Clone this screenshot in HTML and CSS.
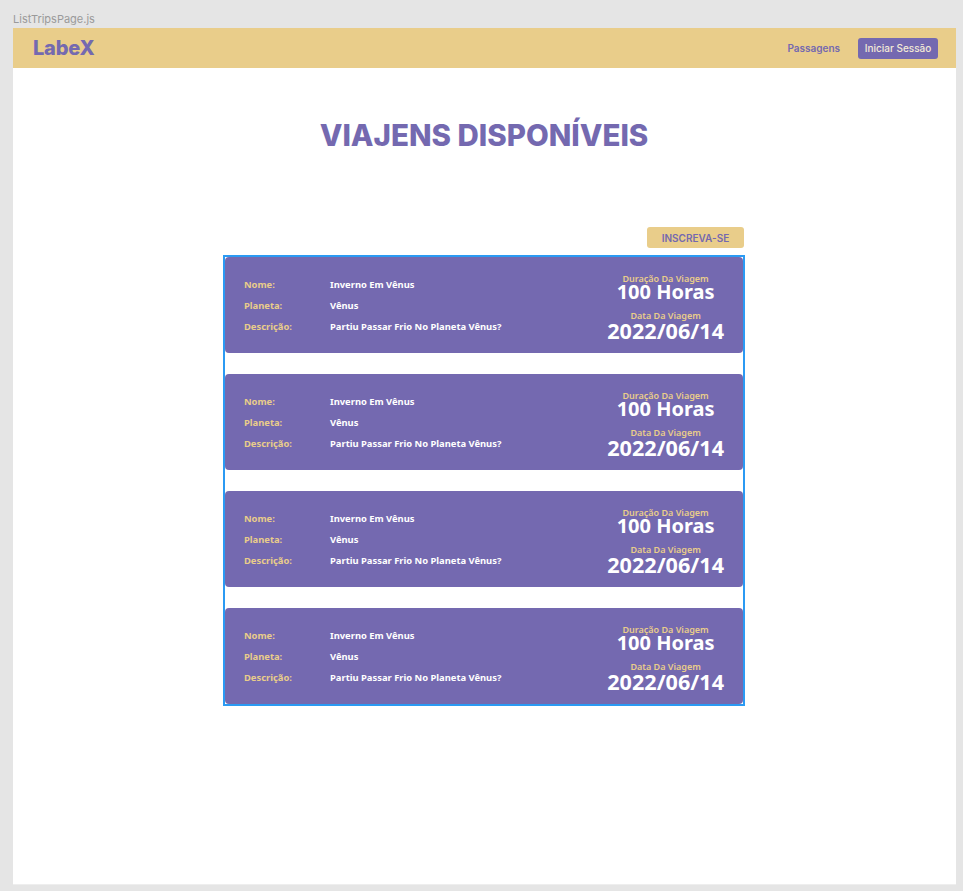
FILE: index.html
```html
<!DOCTYPE html>
<html lang="pt">
<head>
<meta charset="utf-8">
<title>ListTripsPage.js</title>
<link rel="stylesheet" href="styles.css">
</head>
<body>
<div class="frame-label">ListTripsPage.js</div>
<div class="frame">
  <header class="topbar">
    <div class="logo">LabeX</div>
    <nav class="nav">
      <a class="nav-link">Passagens</a>
      <button class="btn-login">Iniciar Sessão</button>
    </nav>
  </header>
  <main class="main">
    <h1 class="title">VIAJENS DISPONÍVEIS</h1>
    <section class="trips">
      <div class="actions">
        <button class="btn-sub">INSCREVA-SE</button>
      </div>
      <div class="list">
        <article class="card">
          <div class="info">
            <div class="row"><span class="lbl">Nome:</span><span class="val">Inverno Em Vênus</span></div>
            <div class="row"><span class="lbl">Planeta:</span><span class="val">Vênus</span></div>
            <div class="row"><span class="lbl">Descrição:</span><span class="val">Partiu Passar Frio No Planeta Vênus?</span></div>
          </div>
          <div class="meta">
            <div class="m-lbl">Duração Da Viagem</div>
            <div class="m-hours">100 Horas</div>
            <div class="m-lbl m-lbl2">Data Da Viagem</div>
            <div class="m-date">2022/06/14</div>
          </div>
        </article>
        <article class="card">
          <div class="info">
            <div class="row"><span class="lbl">Nome:</span><span class="val">Inverno Em Vênus</span></div>
            <div class="row"><span class="lbl">Planeta:</span><span class="val">Vênus</span></div>
            <div class="row"><span class="lbl">Descrição:</span><span class="val">Partiu Passar Frio No Planeta Vênus?</span></div>
          </div>
          <div class="meta">
            <div class="m-lbl">Duração Da Viagem</div>
            <div class="m-hours">100 Horas</div>
            <div class="m-lbl m-lbl2">Data Da Viagem</div>
            <div class="m-date">2022/06/14</div>
          </div>
        </article>
        <article class="card">
          <div class="info">
            <div class="row"><span class="lbl">Nome:</span><span class="val">Inverno Em Vênus</span></div>
            <div class="row"><span class="lbl">Planeta:</span><span class="val">Vênus</span></div>
            <div class="row"><span class="lbl">Descrição:</span><span class="val">Partiu Passar Frio No Planeta Vênus?</span></div>
          </div>
          <div class="meta">
            <div class="m-lbl">Duração Da Viagem</div>
            <div class="m-hours">100 Horas</div>
            <div class="m-lbl m-lbl2">Data Da Viagem</div>
            <div class="m-date">2022/06/14</div>
          </div>
        </article>
        <article class="card">
          <div class="info">
            <div class="row"><span class="lbl">Nome:</span><span class="val">Inverno Em Vênus</span></div>
            <div class="row"><span class="lbl">Planeta:</span><span class="val">Vênus</span></div>
            <div class="row"><span class="lbl">Descrição:</span><span class="val">Partiu Passar Frio No Planeta Vênus?</span></div>
          </div>
          <div class="meta">
            <div class="m-lbl">Duração Da Viagem</div>
            <div class="m-hours">100 Horas</div>
            <div class="m-lbl m-lbl2">Data Da Viagem</div>
            <div class="m-date">2022/06/14</div>
          </div>
        </article>
      </div>
    </section>
  </main>
</div>
</body>
</html>
```

FILE: styles.css
```css
* { box-sizing: border-box; }

html, body {
  margin: 0;
  padding: 0;
  background: #e5e5e5;
  font-family: Inter, "Noto Sans", sans-serif;
}

.frame-label {
  height: 28px;
  padding: 12px 0 0 13px;
  font-size: 11px;
  line-height: 14px;
  color: #9a9a9a;
}

.frame {
  margin-left: 13px;
  width: 943px;
  height: 857px;
  background: #ffffff;
  border-bottom: 1px solid #eeeeee;
}

.topbar {
  height: 40px;
  background: #e9cd8a;
  display: flex;
  align-items: center;
  justify-content: space-between;
  padding: 0 18px 0 20px;
}

.logo {
  font-size: 20px;
  font-weight: 800;
  color: #7469b0;
  letter-spacing: -0.2px;
}

.nav {
  display: flex;
  align-items: center;
  gap: 18px;
}

.nav-link {
  font-size: 10px;
  font-weight: 600;
  color: #7469b0;
}

.btn-login {
  height: 21px;
  width: 80px;
  border: none;
  border-radius: 3px;
  background: #7469b0;
  color: #f3ead6;
  font-family: Inter, sans-serif;
  font-size: 10px;
  font-weight: 500;
  padding: 0;
}

.main {
  display: flex;
  flex-direction: column;
  align-items: center;
  padding-right: 1px;
}

.title {
  margin: 52px 0 0;
  height: 30px;
  font-size: 29.5px;
  line-height: 30px;
  font-weight: 800;
  color: #7469b0;
}

.trips {
  margin-top: 77px;
  width: 522px;
  display: flex;
  flex-direction: column;
}

.actions {
  display: flex;
  justify-content: flex-end;
  padding-right: 1px;
}

.btn-sub {
  width: 97px;
  height: 21px;
  border: none;
  border-radius: 3px;
  background: #e9cd8a;
  color: #7469b0;
  font-family: Inter, sans-serif;
  font-size: 10px;
  font-weight: 600;
  padding: 0;
}

.list {
  margin-top: 7px;
  border: 2px solid #2b9af3;
  display: flex;
  flex-direction: column;
  gap: 21px;
}

.card {
  height: 96px;
  background: #7469b0;
  border-radius: 4px;
  display: flex;
  justify-content: space-between;
  padding: 0 19px;
  font-family: "Noto Sans", sans-serif;
}

.info {
  align-self: center;
  display: flex;
  flex-direction: column;
}

.row {
  display: flex;
  height: 21px;
  align-items: center;
  font-size: 9.4px;
  font-weight: 700;
}

.lbl {
  width: 86px;
  color: #e9cd8a;
}

.val {
  color: #ffffff;
}

.meta {
  padding-top: 16px;
  display: flex;
  flex-direction: column;
  align-items: center;
  color: #ffffff;
  font-weight: 700;
}

.m-lbl {
  font-size: 9px;
  line-height: 12px;
  color: #e9cd8a;
  font-weight: 600;
}

.m-lbl2 {
  margin-top: 11px;
}

.m-hours {
  font-size: 20px;
  line-height: 14px;
  margin-top: 0;
}

.m-date {
  font-size: 21.6px;
  line-height: 18px;
  margin-top: 0;
}
```
